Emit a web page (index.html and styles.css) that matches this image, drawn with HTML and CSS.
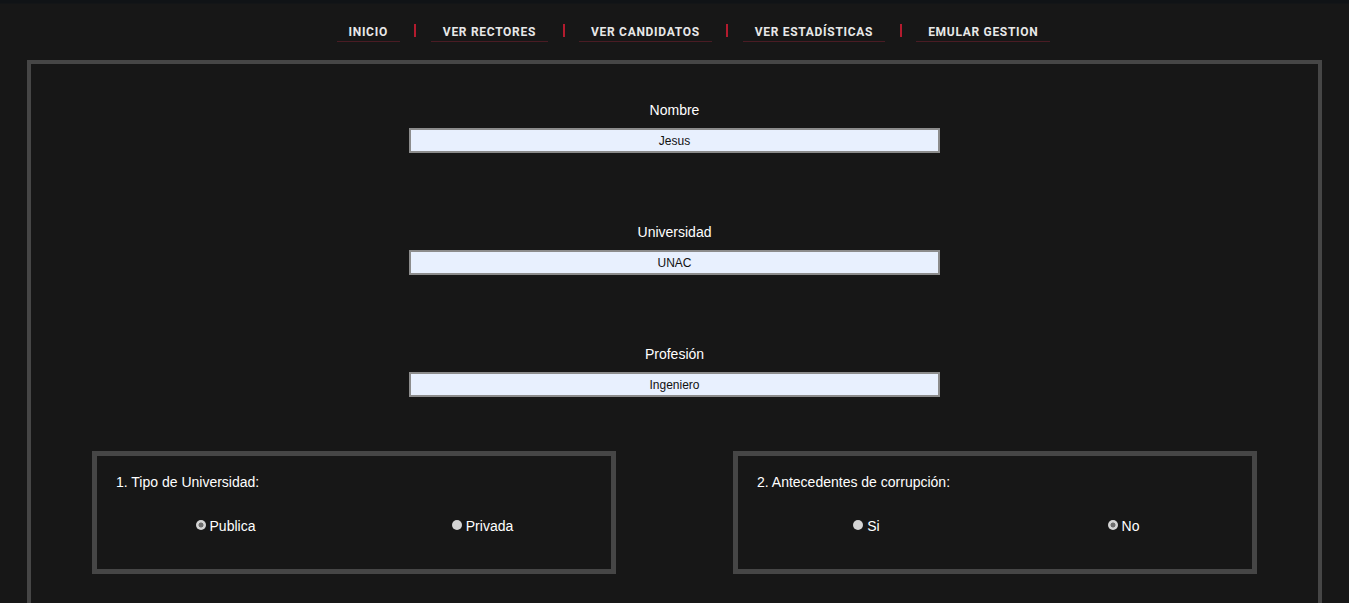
FILE: index.html
```html
<!DOCTYPE html>
<html lang="es">
<head>
<meta charset="utf-8">
<title>Candidatos</title>
<link rel="stylesheet" href="styles.css">
</head>
<body>
<div class="topstrip"></div>
<nav class="nav">
  <a class="nav-link" href="#">INICIO</a>
  <span class="nav-sep"></span>
  <a class="nav-link" href="#">VER RECTORES</a>
  <span class="nav-sep"></span>
  <a class="nav-link" href="#">VER CANDIDATOS</a>
  <span class="nav-sep"></span>
  <a class="nav-link" href="#">VER ESTADÍSTICAS</a>
  <span class="nav-sep"></span>
  <a class="nav-link" href="#">EMULAR GESTION</a>
</nav>
<main class="panel">
  <div class="field">
    <label class="field-label" for="nombre">Nombre</label>
    <input class="field-input" id="nombre" type="text" value="Jesus">
  </div>
  <div class="field">
    <label class="field-label" for="uni">Universidad</label>
    <input class="field-input" id="uni" type="text" value="UNAC">
  </div>
  <div class="field">
    <label class="field-label" for="prof">Profesión</label>
    <input class="field-input" id="prof" type="text" value="Ingeniero">
  </div>
  <div class="questions">
    <section class="qbox">
      <p class="qtitle">1. Tipo de Universidad:</p>
      <div class="options">
        <label class="option"><input class="radio" type="radio" name="tipo" checked>Publica</label>
        <label class="option"><input class="radio" type="radio" name="tipo">Privada</label>
      </div>
    </section>
    <section class="qbox">
      <p class="qtitle">2. Antecedentes de corrupción:</p>
      <div class="options">
        <label class="option"><input class="radio" type="radio" name="corr">Si</label>
        <label class="option"><input class="radio" type="radio" name="corr" checked>No</label>
      </div>
    </section>
  </div>
</main>
</body>
</html>
```

FILE: styles.css
```css
html, body {
  margin: 0;
  padding: 0;
  background: #171717;
  height: 100%;
  overflow: hidden;
}
body {
  font-family: "Liberation Sans", Arial, sans-serif;
  color: #ffffff;
}
.topstrip {
  height: 3px;
  background: #101316;
  border-bottom: 1px solid #131517;
}
.nav {
  display: flex;
  justify-content: center;
  align-items: center;
  padding-top: 18px;
  padding-left: 38px;
  margin-bottom: 18px;
}
.nav-link {
  display: block;
  font-family: Roboto, "Liberation Sans", sans-serif;
  font-weight: 700;
  font-size: 12px;
  letter-spacing: 0.7px;
  line-height: 14px;
  color: #e8e8e8;
  text-decoration: none;
  padding: 3px 12px 2px;
  border-bottom: 1px solid #4a1c24;
}
.nav-sep {
  width: 2px;
  height: 13px;
  background: #b31b2e;
  margin: 0 14.5px 4px;
}
.panel {
  margin: 0 27px;
  border: 4px solid #464646;
  border-bottom: none;
  padding-top: 38px;
  height: 560px;
}
.field {
  display: flex;
  flex-direction: column;
  align-items: center;
  margin-bottom: 71px;
}
.field-label {
  font-size: 14px;
  line-height: 16px;
  margin-bottom: 10px;
}
.field-input {
  box-sizing: border-box;
  width: 531px;
  height: 25px;
  border: 2px solid #8c8c8c;
  background: #e8f0fe;
  color: #111;
  font-family: "Liberation Sans", Arial, sans-serif;
  font-size: 12px;
  text-align: center;
  padding: 0;
  outline: none;
}
.questions {
  display: flex;
  justify-content: space-between;
  padding: 0 61px 0 61px;
  margin-top: -17px;
}
.qbox {
  box-sizing: border-box;
  width: 524px;
  border: 5px solid #464646;
  padding: 18px 19px 35px;
}
.qtitle {
  margin: 0 0 28px;
  font-size: 14px;
  line-height: 16px;
}
.options {
  display: grid;
  grid-template-columns: 1fr 1fr;
  margin: 0 -19px;
}
.option {
  justify-self: center;
  display: flex;
  align-items: center;
  font-size: 14px;
  line-height: 16px;
}
.radio {
  appearance: none;
  -webkit-appearance: none;
  width: 10px;
  height: 10px;
  margin: 0 4px 3px 0;
  border-radius: 50%;
  background: #d4d4d4;
  border: none;
}
.radio:checked {
  background: radial-gradient(circle, #6e6e6e 0 2.2px, #d4d4d4 2.8px);
}
```
